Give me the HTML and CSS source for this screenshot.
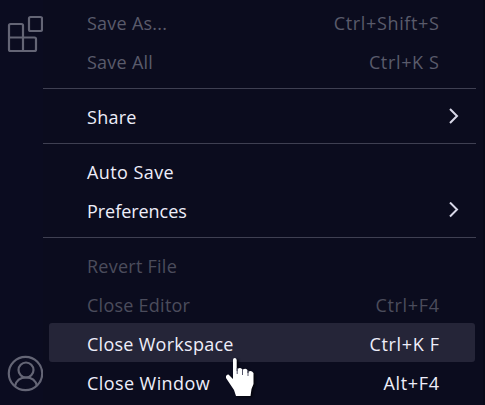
FILE: index.html
```html
<!DOCTYPE html>
<html lang="en">
<head>
<meta charset="utf-8">
<title>File menu</title>
<link rel="stylesheet" href="styles.css">
</head>
<body>
<div class="app">
  <aside class="activity-bar">
    <svg class="extensions" width="43" height="60" viewBox="0 0 43 60">
      <rect x="29" y="17" width="13" height="14" rx="1.5"/>
      <path d="M10.5 24H21.5Q23 24 23 25.5V37.5H34.5Q36 37.5 36 39V49.5Q36 51 34.5 51H10.5Q9 51 9 49.5V25.5Q9 24 10.5 24ZM9 37.5H23V51"/>
    </svg>
    <svg class="account" width="43" height="60" viewBox="0 0 43 60">
      <circle cx="25.5" cy="28.5" r="16.7"/>
      <circle cx="26" cy="25" r="7.5"/>
      <path d="M15 41Q17 32.5 26 32.5T37 41"/>
    </svg>
  </aside>
  <nav class="menu">
    <div class="item disabled"><span class="label">Save As...</span><span class="key">Ctrl+Shift+S</span></div>
    <div class="item disabled"><span class="label">Save All</span><span class="key">Ctrl+K S</span></div>
    <div class="separator"></div>
    <div class="item"><span class="label">Share</span><svg class="chevron" width="12" height="18" viewBox="0 0 12 18"><path d="M2 1L9 8L2 15"/></svg></div>
    <div class="separator"></div>
    <div class="item"><span class="label loose">Auto Save</span></div>
    <div class="item"><span class="label tight">Preferences</span><svg class="chevron" width="12" height="18" viewBox="0 0 12 18"><path d="M2 0.5L9 7.5L2 14.5"/></svg></div>
    <div class="separator"></div>
    <div class="item disabled dim"><span class="label">Revert File</span></div>
    <div class="item disabled dim"><span class="label">Close Editor</span><span class="key">Ctrl+F4</span></div>
    <div class="item active"><span class="label">Close Workspace</span><span class="key">Ctrl+K F</span></div>
    <div class="item"><span class="label loose">Close Window</span><span class="key">Alt+F4</span></div>
  </nav>
  <svg class="pointer" width="34" height="46" viewBox="0 0 34 46">
    <path d="M8 5Q8 3 9.7 3T11.7 5V16H12.5V14Q15 12 17 14V17H18V14.5Q20.5 13 22.5 15V18H23.5V16.5Q26.5 15 28.5 18V29L26.5 34L25.5 41H11L9 35L1 23Q.5 19.5 3.5 19.5L8 24Z"/>
    <path class="knuckles" d="M12.2 13V19M17.5 14V20M23 15.5V21"/>
  </svg>
</div>
</body>
</html>
```
FILE: styles.css
```css
body {
  margin: 0;
  background: #0b0c1e;
  font-family: "Open Sans", "Noto Sans", sans-serif;
  font-size: 18px;
  color: #eeeefa;
}
.app {
  position: relative;
  display: flex;
  width: 485px;
  height: 405px;
  overflow: hidden;
}
.activity-bar {
  display: flex;
  flex-direction: column;
  justify-content: space-between;
  width: 43px;
  background: #0b0c20;
}
.activity-bar svg {
  fill: none;
  stroke: #646575;
  stroke-width: 2.2;
}
.menu {
  flex: 1;
  box-sizing: border-box;
  padding-top: 2px;
  border-right: 2px solid #080918;
}
.item {
  display: flex;
  align-items: center;
  justify-content: space-between;
  box-sizing: border-box;
  height: 39px;
  margin: 0 8px 0 6px;
  padding: 2px 36px 0 38px;
  border-radius: 3px;
  line-height: 36px;
  white-space: nowrap;
  font-weight: 500;
}
.label { letter-spacing: 0.27px; }
.loose { letter-spacing: 0.42px; }
.tight { letter-spacing: -0.05px; }
.key {
  margin-right: -0.6px;
  letter-spacing: 0.65px;
  font-weight: 400;
}
.disabled {
  color: #5a5b6b;
  font-weight: 400;
}
.disabled .label { letter-spacing: 0.25px; }
.dim { color: #4b4c5c; }
.active { background: #252538; }
.separator {
  box-sizing: border-box;
  height: 16px;
  padding-top: 8px;
}
.separator::before {
  content: "";
  display: block;
  height: 1px;
  margin-right: 7px;
  background: #3f4052;
}
.chevron {
  margin-right: -21px;
  fill: none;
  stroke: #d8d8e8;
  stroke-width: 2;
}
.pointer {
  position: absolute;
  left: 225px;
  top: 355px;
  fill: #fff;
  filter: drop-shadow(2px 1px 1px #05050d);
}
.knuckles {
  fill: none;
  stroke: #55566a;
  stroke-width: 1;
}
```
